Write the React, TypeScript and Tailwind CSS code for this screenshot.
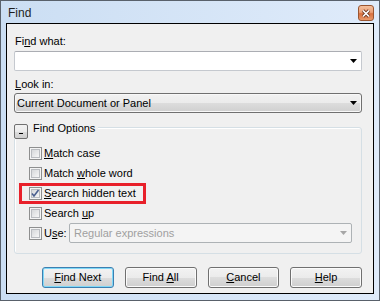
const font = "font-['Liberation_Sans',Arial,sans-serif]";
const btnBg = "bg-[linear-gradient(#f2f2f2,#ebebeb_50%,#dddddd_50%,#cfcfcf)]";

function Arrow({ color = "#000" }: { color?: string }) {
  return (
    <svg width="7" height="4" viewBox="0 0 7 4">
      <path d="M0 0h7L3.5 4z" fill={color} />
    </svg>
  );
}

function Check({ checked }: { checked?: boolean }) {
  return (
    <span className="relative w-[13px] h-[13px] border border-[#8e8f8f] bg-[#f4f4f4] p-[1px] flex shrink-0">
      <span className="flex-1 border border-[#b9bcc0] bg-[linear-gradient(135deg,#d6d8da,#f6f6f6)]" />
      {checked && (
        <svg className="absolute left-0 top-0" width="11" height="11" viewBox="0 0 11 11">
          <path d="M2 5.5l2 2.5L8.5 2" fill="none" stroke="#4a5f8f" strokeWidth="1.6" />
        </svg>
      )}
    </span>
  );
}

function Btn({ children, focus }: { children: React.ReactNode; focus?: boolean }) {
  return (
    <div
      className={`w-[72px] h-[21px] rounded-[3px] border flex items-center justify-center ${btnBg} ${
        focus
          ? "border-[#3c7fb1] shadow-[inset_0_0_0_1px_#7fd8f7]"
          : "border-[#707070] shadow-[inset_0_0_0_1px_#fbfbfb]"
      }`}
    >
      {children}
    </div>
  );
}

function Row({ children }: { children: React.ReactNode }) {
  return <div className="h-[20px] flex items-center gap-[2px]">{children}</div>;
}

export default function App() {
  return (
    <div
      className={`${font} w-[380px] h-[301px] border border-[#59616b] bg-[linear-gradient(90deg,#cbdef3,#dfebfa)] flex flex-col text-[11px] leading-[13px] text-black`}
    >
      {/* title bar */}
      <div className="h-[22px] flex items-start justify-between pl-[7px] pr-[5px]">
        <span className="text-[12px] leading-[15px] mt-[5px] text-[#1e1e1e]">Find</span>
        <div className="mt-[4px] w-[16px] h-[16px] rounded-[3px] border border-[#9a5530] bg-[linear-gradient(#f4c09c,#eba078_45%,#d8703f_55%,#e99a6c)] flex items-center justify-center">
          <svg width="10" height="9" viewBox="0 0 10 9">
            <path d="M2 1.5l6 6M8 1.5l-6 6" stroke="#6a3520" strokeWidth="3.2" />
            <path d="M2 1.5l6 6M8 1.5l-6 6" stroke="#fff" strokeWidth="1.7" />
          </svg>
        </div>
      </div>

      {/* client area */}
      <div className="mx-[5px] h-[271px] border border-black bg-[#f0f0f0] flex flex-col pl-[7px] pr-[11px]">
        <div className="mt-[11px] ml-[1px]">
          Fi<u>n</u>d what:
        </div>
        <div className="mt-[3px] h-[20px] bg-white rounded-[2px] border border-[#c5c9cf] border-t-[#abadb3] flex items-center justify-end pr-[4px]">
          <Arrow />
        </div>

        <div className="mt-[7px] ml-[1px]">
          <u>L</u>ook in:
        </div>
        <div className={`mt-[2px] h-[20px] rounded-[3px] border border-[#707070] ${btnBg} shadow-[inset_0_0_0_1px_#f8f8f8] flex items-center justify-between pl-[2px] pr-[4px]`}>
          <span>Current Document or Panel</span>
          <Arrow />
        </div>

        {/* Find Options group */}
        <div className="relative mt-[14px] border border-[#d5dfe5] rounded-[3px] shadow-[inset_1px_1px_0_#fff] pt-[15px] pb-[10px] pl-[14px]">
          <div className="absolute left-[-1px] top-[-6px] flex items-start bg-[#f0f0f0] pr-[3px]">
            <div className={`mt-[2px] w-[14px] h-[15px] rounded-[2px] border border-[#707070] ${btnBg} flex items-center justify-center`}>
              <span className="mt-[4px] w-[4px] h-[1px] bg-black" />
            </div>
            <span className="ml-[5px]">Find Options</span>
          </div>

          <Row>
            <Check />
            <span>
              <u>M</u>atch case
            </span>
          </Row>
          <Row>
            <Check />
            <span>
              Match <u>w</u>hole word
            </span>
          </Row>
          <Row>
            <Check checked />
            <span>
              <u>S</u>earch hidden text
            </span>
          </Row>
          <Row>
            <Check />
            <span>
              Search <u>u</u>p
            </span>
          </Row>
          <div className="h-[20px] flex items-center gap-[2px] pr-[9px]">
            <Check />
            <span>
              U<u>s</u>e:
            </span>
            <div className="ml-auto w-[283px] h-[20px] rounded-[2px] border border-[#adb2b5] bg-[#f4f4f4] flex items-center justify-between pl-[4px] pr-[4px] text-[#a0a0a0]">
              <span>Regular expressions</span>
              <Arrow color="#a6a6a6" />
            </div>
          </div>

          {/* highlight */}
          <div className="absolute left-[4px] top-[55px] w-[127px] h-[21px] border-[3px] border-[#e8202a]" />
        </div>

        <div className="mt-[13px] ml-[28px] flex gap-[11px]">
          <Btn focus>
            <span>
              <u>F</u>ind Next
            </span>
          </Btn>
          <Btn>
            <span>
              Find <u>A</u>ll
            </span>
          </Btn>
          <Btn>
            <span>
              <u>C</u>ancel
            </span>
          </Btn>
          <Btn>
            <span>
              <u>H</u>elp
            </span>
          </Btn>
        </div>
      </div>
    </div>
  );
}
